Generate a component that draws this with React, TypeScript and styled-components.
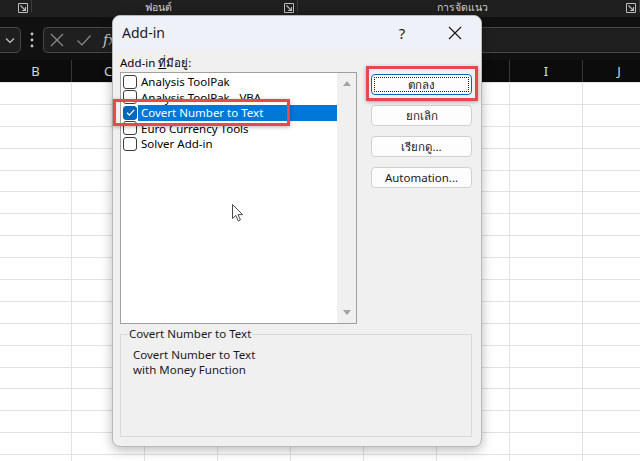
import styled, { createGlobalStyle } from "styled-components";

const UI_FONT = `"Noto Sans", "Open Sans", "DejaVu Sans", sans-serif`;

const COLUMNS = ["B", "C", "D", "E", "F", "G", "H", "I", "J"];
const COLUMN_WIDTHS = [72, 73, 73, 73, 73, 73, 73, 73, 73];
const ROW_COUNT = 18;

const ADDINS = [
  { name: "Analysis ToolPak", checked: false },
  { name: "Analysis ToolPak - VBA", checked: false },
  { name: "Covert Number to Text", checked: true },
  { name: "Euro Currency Tools", checked: false },
  { name: "Solver Add-in", checked: false },
];

const GlobalStyle = createGlobalStyle`
  html, body {
    margin: 0;
    padding: 0;
    background: #ffffff;
    font-family: ${UI_FONT};
  }
  * {
    box-sizing: border-box;
  }
`;

const Launcher = () => (
  <LauncherIcon width="10" height="10" viewBox="0 0 10 10">
    <path d="M0.5 9.5 V0.5 H9.5 V9.5 H0.5" fill="none" stroke="#bdbdbd" strokeWidth="1" />
    <path d="M2.5 2.5 L7.5 7.5 M7.5 4 V7.5 H4" fill="none" stroke="#bdbdbd" strokeWidth="1.1" />
  </LauncherIcon>
);

const CheckMark = ({ color }: { color: string }) => (
  <svg width="11" height="11" viewBox="0 0 11 11">
    <path d="M2 5.8 L4.4 8.1 L9.2 2.9" fill="none" stroke={color} strokeWidth="1.3" />
  </svg>
);

export default function App() {
  return (
    <Screen>
      <GlobalStyle />
      <Ribbon>
        <RibbonGroup $width={32}>
          <Launcher />
        </RibbonGroup>
        <RibbonGroup $width={266}>
          <GroupLabel>ฟอนต์</GroupLabel>
          <Launcher />
        </RibbonGroup>
        <RibbonGroup $width={342}>
          <GroupLabel>การจัดแนว</GroupLabel>
          <Launcher />
        </RibbonGroup>
      </Ribbon>

      <FormulaBar>
        <NameBox>
          <svg width="14" height="14" viewBox="0 0 14 14">
            <path d="M3 5.5 L7 9.5 L11 5.5" fill="none" stroke="#c8c8c8" strokeWidth="1.2" />
          </svg>
        </NameBox>
        <DotsHandle width="6" height="18" viewBox="0 0 6 18">
          <circle cx="3" cy="3" r="1.4" fill="#c8c8c8" />
          <circle cx="3" cy="9" r="1.4" fill="#c8c8c8" />
          <circle cx="3" cy="15" r="1.4" fill="#c8c8c8" />
        </DotsHandle>
        <FormulaBox>
          <svg width="16" height="16" viewBox="0 0 16 16">
            <path d="M2 2 L14 14 M14 2 L2 14" stroke="#8c8c8c" strokeWidth="1.2" />
          </svg>
          <svg width="16" height="16" viewBox="0 0 16 16">
            <path d="M1.5 8.5 L6 13 L14.5 3.5" fill="none" stroke="#8c8c8c" strokeWidth="1.2" />
          </svg>
          <Fx>fx</Fx>
        </FormulaBox>
      </FormulaBar>

      <ColumnHeader>
        {COLUMNS.map((col, i) => (
          <HeaderCell key={col} $width={COLUMN_WIDTHS[i]}>
            {col}
          </HeaderCell>
        ))}
      </ColumnHeader>

      <Sheet>
        {Array.from({ length: ROW_COUNT }).map((_, r) => (
          <SheetRow key={r}>
            {COLUMNS.map((col, i) => (
              <SheetCell key={col} $width={COLUMN_WIDTHS[i]} />
            ))}
          </SheetRow>
        ))}
      </Sheet>

      <Dialog>
        <TitleBar>
          <Title>Add-in</Title>
          <CaptionButtons>
            <HelpButton>?</HelpButton>
            <CloseButton>
              <svg width="14" height="14" viewBox="0 0 14 14">
                <path d="M1 1 L13 13 M13 1 L1 13" stroke="#1a1a1a" strokeWidth="1.2" />
              </svg>
            </CloseButton>
          </CaptionButtons>
        </TitleBar>

        <DialogBody>
          <ListLabel>
            Add-in <u>ท</u>ี่มีอยู่:
          </ListLabel>
          <MainRow>
            <ListBox>
              <ListItems>
                {ADDINS.map((item) => (
                  <ListItem key={item.name}>
                    <CheckBox $checked={item.checked}>
                      {item.checked && <CheckMark color="#ffffff" />}
                    </CheckBox>
                    <ItemText $selected={item.checked}>{item.name}</ItemText>
                  </ListItem>
                ))}
              </ListItems>
              <ScrollTrack>
                <ArrowUp />
                <ArrowDown />
              </ScrollTrack>
            </ListBox>

            <ButtonColumn>
              <DialogButton $default>ตกลง</DialogButton>
              <DialogButton>ยกเลิก</DialogButton>
              <DialogButton>เรียกดู...</DialogButton>
              <DialogButton>Automation...</DialogButton>
            </ButtonColumn>
          </MainRow>

          <GroupBox>
            <GroupLegend>Covert Number to Text</GroupLegend>
            <Description>
              <div>Covert Number to Text</div>
              <div>with Money Function</div>
            </Description>
          </GroupBox>
        </DialogBody>
      </Dialog>

      <Highlight $left={113} $top={99} $width={177} $height={27} />
      <Highlight $left={366} $top={66} $width={112} $height={35} />

      <Cursor width="13" height="19" viewBox="0 0 13 19">
        <path
          d="M0.5 0.5 L0.5 14.5 L3.8 11.4 L6.2 17 L8.4 16 L6.1 10.6 L10.6 10.6 Z"
          fill="#ffffff"
          stroke="#4a4a4a"
          strokeWidth="1"
          strokeLinejoin="round"
        />
      </Cursor>
    </Screen>
  );
}

const Screen = styled.div`
  position: relative;
  width: 640px;
  height: 461px;
  overflow: hidden;
  background: #ffffff;
  display: flex;
  flex-direction: column;
`;

const Ribbon = styled.div`
  display: flex;
  height: 17px;
  background: #1f1f1f;
  flex-shrink: 0;
`;

const RibbonGroup = styled.div<{ $width: number }>`
  width: ${(p) => p.$width}px;
  flex-shrink: 0;
  display: flex;
  align-items: flex-start;
  justify-content: flex-end;
  padding: 3px 3px 0 0;
  border-right: 1px solid #3c3c3c;
  height: 12px;
`;

const GroupLabel = styled.div`
  flex: 1;
  text-align: center;
  margin-top: -2px;
  font-size: 10.5px;
  line-height: 13px;
  color: #d4d4d4;
`;

const LauncherIcon = styled.svg`
  flex-shrink: 0;
`;

const FormulaBar = styled.div`
  display: flex;
  align-items: center;
  gap: 8px;
  height: 43px;
  padding: 10px 0 7px 0;
  background: #111111;
  flex-shrink: 0;
`;

const NameBox = styled.div`
  width: 61px;
  height: 26px;
  margin-left: -40px;
  display: flex;
  align-items: center;
  justify-content: flex-end;
  padding-right: 3px;
  background: #1f1f1f;
  border: 1px solid #474747;
  border-radius: 5px;
`;

const DotsHandle = styled.svg`
  flex-shrink: 0;
`;

const FormulaBox = styled.div`
  flex: 1;
  height: 26px;
  display: flex;
  align-items: center;
  gap: 11px;
  padding-left: 5px;
  background: #1f1f1f;
  border: 1px solid #474747;
  border-right: none;
  border-radius: 5px 0 0 5px;
`;

const Fx = styled.span`
  font-family: "DejaVu Serif", serif;
  font-style: italic;
  font-size: 14px;
  color: #c8c8c8;
`;

const ColumnHeader = styled.div`
  display: flex;
  height: 22px;
  background: #0c0c0c;
  flex-shrink: 0;
`;

const HeaderCell = styled.div<{ $width: number }>`
  width: ${(p) => p.$width}px;
  flex-shrink: 0;
  display: flex;
  align-items: center;
  justify-content: center;
  border-right: 1px solid #383838;
  font-size: 13px;
  color: #d8d8d8;
`;

const Sheet = styled.div`
  display: flex;
  flex-direction: column;
  border-top: 1px solid #e2e2e2;
`;

const SheetRow = styled.div`
  display: flex;
  height: 21.9px;
  flex-shrink: 0;
  border-bottom: 1px solid #e2e2e2;
`;

const SheetCell = styled.div<{ $width: number }>`
  width: ${(p) => p.$width}px;
  flex-shrink: 0;
  border-right: 1px solid #e2e2e2;
`;

const Dialog = styled.div`
  position: absolute;
  left: 112px;
  top: 15px;
  width: 370px;
  height: 432px;
  display: flex;
  flex-direction: column;
  background: #f0f0f0;
  border: 1px solid #b9b9b9;
  border-radius: 8px;
  box-shadow: 0 3px 12px rgba(0, 0, 0, 0.28);
  overflow: hidden;
  font-family: ${UI_FONT};
  color: #000000;
`;

const TitleBar = styled.div`
  height: 33px;
  display: flex;
  align-items: center;
  justify-content: space-between;
  background: #eef2f8;
  padding-left: 9px;
`;

const Title = styled.div`
  font-size: 14px;
  color: #1a1a1a;
`;

const CaptionButtons = styled.div`
  display: flex;
  align-items: center;
  gap: 15px;
  padding-right: 3px;
  height: 100%;
`;

const HelpButton = styled.div`
  width: 30px;
  text-align: center;
  font-size: 15px;
  color: #1a1a1a;
`;

const CloseButton = styled.div`
  width: 46px;
  display: flex;
  justify-content: center;
`;

const DialogBody = styled.div`
  flex: 1;
  display: flex;
  flex-direction: column;
  padding: 5px 9px 9px 7px;
`;

const ListLabel = styled.div`
  height: 17px;
  line-height: 17px;
  margin-bottom: 1px;
  font-size: 11.5px;
  color: #000000;

  u {
    text-decoration-thickness: 1px;
  }
`;

const MainRow = styled.div`
  display: flex;
  gap: 14px;
`;

const ListBox = styled.div`
  width: 237px;
  height: 252px;
  display: flex;
  background: #ffffff;
  border: 1px solid #a0a0a0;
`;

const ListItems = styled.div`
  flex: 1;
  padding-top: 1px;
  display: flex;
  flex-direction: column;
`;

const ListItem = styled.div`
  height: 15.5px;
  display: flex;
  align-items: center;
  padding-left: 2px;
`;

const CheckBox = styled.div<{ $checked?: boolean }>`
  width: 14px;
  height: 14px;
  flex-shrink: 0;
  display: flex;
  align-items: center;
  justify-content: center;
  border-radius: 3px;
  border: 1px solid ${(p) => (p.$checked ? "#0063b8" : "#3c3c3c")};
  background: ${(p) => (p.$checked ? "#0067c0" : "#ffffff")};
`;

const ItemText = styled.div<{ $selected?: boolean }>`
  flex: 1;
  height: 15.5px;
  margin-left: 1px;
  padding-left: 3px;
  font-size: 11.5px;
  line-height: 15.5px;
  white-space: nowrap;
  color: ${(p) => (p.$selected ? "#ffffff" : "#000000")};
  background: ${(p) => (p.$selected ? "#0078d7" : "transparent")};
`;

const ScrollTrack = styled.div`
  width: 19px;
  display: flex;
  flex-direction: column;
  justify-content: space-between;
  align-items: center;
  padding: 8px 0 8px;
  background: #f0f0f0;
`;

const ArrowUp = styled.div`
  width: 0;
  height: 0;
  border-left: 4.5px solid transparent;
  border-right: 4.5px solid transparent;
  border-bottom: 5px solid #a3a3a3;
`;

const ArrowDown = styled.div`
  width: 0;
  height: 0;
  border-left: 4.5px solid transparent;
  border-right: 4.5px solid transparent;
  border-top: 5px solid #a3a3a3;
`;

const ButtonColumn = styled.div`
  display: flex;
  flex-direction: column;
  gap: 10px;
  margin-top: 2px;
`;

const DialogButton = styled.div<{ $default?: boolean }>`
  position: relative;
  width: 101px;
  height: 21px;
  display: flex;
  align-items: center;
  justify-content: center;
  font-size: 11.5px;
  color: #1a1a1a;
  background: #fdfdfd;
  border: 1px solid ${(p) => (p.$default ? "#0067c0" : "#d0d0d0")};
  border-radius: 4px;

  &::after {
    content: "";
    display: ${(p) => (p.$default ? "block" : "none")};
    position: absolute;
    inset: 2px;
    border: 1px dotted #202020;
  }
`;

const GroupBox = styled.fieldset`
  margin: 2px 0 0 0;
  padding: 6px 12px 0 12px;
  flex: 1;
  border: 1px solid #d9d9d9;
  min-width: 0;
`;

const GroupLegend = styled.legend`
  margin-left: -5px;
  padding: 0 1px;
  font-size: 11.5px;
  line-height: 16px;
  color: #1a1a1a;
`;

const Description = styled.div`
  display: flex;
  flex-direction: column;
  font-size: 11.5px;
  line-height: 14.5px;
  color: #1a1a1a;
`;

const Highlight = styled.div<{ $left: number; $top: number; $width: number; $height: number }>`
  position: absolute;
  left: ${(p) => p.$left}px;
  top: ${(p) => p.$top}px;
  width: ${(p) => p.$width}px;
  height: ${(p) => p.$height}px;
  border: 3px solid #e8474b;
  box-shadow: 0 1px 4px rgba(0, 0, 0, 0.3);
`;

const Cursor = styled.svg`
  position: absolute;
  left: 232px;
  top: 204px;
`;
